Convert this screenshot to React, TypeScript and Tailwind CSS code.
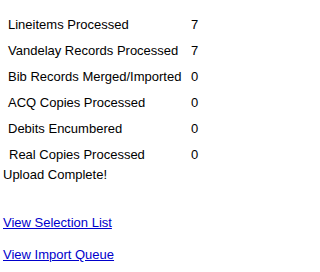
import React from "react";

const rows: [string, string, boolean?][] = [
  ["Lineitems Processed", "7"],
  ["Vandelay Records Processed", "7"],
  ["Bib Records Merged/Imported", "0"],
  ["ACQ Copies Processed", "0"],
  ["Debits Encumbered", "0"],
  ["Real Copies Processed", "0", true],
];

export default function App() {
  return (
    <div className="w-[218px] h-[272px] bg-white text-black text-[13px] leading-[15px] font-['Liberation_Sans',Arial,sans-serif]">
      <div className="pt-[11px] pl-[8px]">
        {rows.map(([label, value, indent]) => (
          <div key={label} className="flex h-[26px] items-center">
            <span className={`w-[183px] ${indent ? "pl-[1px]" : ""}`}>{label}</span>
            <span>{value}</span>
          </div>
        ))}
      </div>
      <div className="pl-[3px]">Upload Complete!</div>
      <div className="pl-[3px] pt-[33px]">
        <a href="#" className="underline text-[#0000cc]">View Selection List</a>
      </div>
      <div className="pl-[3px] pt-[17px]">
        <a href="#" className="underline text-[#0000cc]">View Import Queue</a>
      </div>
    </div>
  );
}
